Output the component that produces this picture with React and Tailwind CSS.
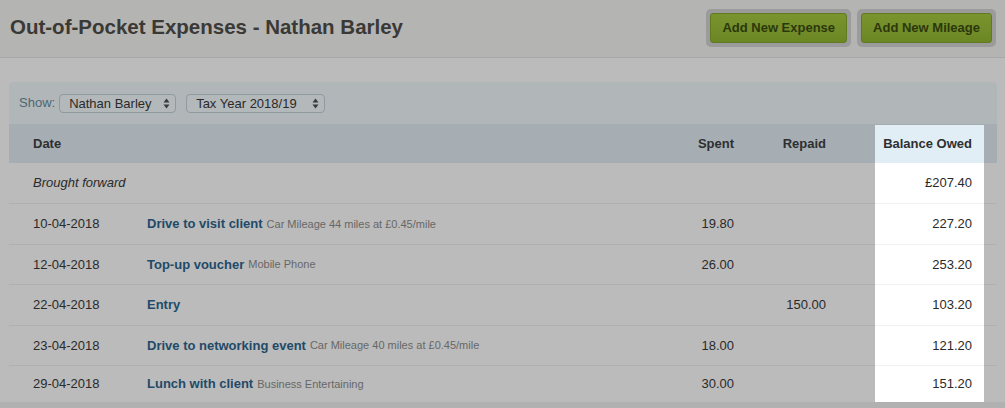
const rows = [
  { date: '10-04-2018', title: 'Drive to visit client', sub: 'Car Mileage 44 miles at £0.45/mile', spent: '19.80', repaid: '', balance: '227.20' },
  { date: '12-04-2018', title: 'Top-up voucher', sub: 'Mobile Phone', spent: '26.00', repaid: '', balance: '253.20' },
  { date: '22-04-2018', title: 'Entry', sub: '', spent: '', repaid: '150.00', balance: '103.20' },
  { date: '23-04-2018', title: 'Drive to networking event', sub: 'Car Mileage 40 miles at £0.45/mile', spent: '18.00', repaid: '', balance: '121.20' },
  { date: '29-04-2018', title: 'Lunch with client', sub: 'Business Entertaining', spent: '30.00', repaid: '', balance: '151.20' },
];

function SelectBox({ label, width }) {
  return (
    <div
      className={`flex items-center justify-between h-[19px] pl-[9px] pr-[5px] rounded-[4px] border border-[#8f9a9f] bg-[#b3b8ba] ${width}`}
    >
      <span className="text-[13px] text-[#2a2a2a] leading-none">{label}</span>
      <svg width="7" height="11" viewBox="0 0 7 11" className="text-[#3a3a3a]">
        <path d="M3.5 0.5 L6.5 4.5 H0.5 Z" fill="currentColor" />
        <path d="M3.5 10.5 L6.5 6.5 H0.5 Z" fill="currentColor" />
      </svg>
    </div>
  );
}

function GreenButton({ children }) {
  return (
    <div className="p-[4px] rounded-[5px] bg-[#9b9b9b]">
      <div className="h-[30px] px-[11px] flex items-center rounded-[3px] border border-[#5f7a1f] bg-gradient-to-b from-[#7a952e] to-[#6b8724] text-[13px] font-bold text-[#2c380c]">
        {children}
      </div>
    </div>
  );
}

export default function App() {
  return (
    <div className="w-[1005px] h-[408px] overflow-hidden bg-[#bbbbbb] font-['Liberation_Sans',Arial,sans-serif]">
      {/* Page header */}
      <div className="h-[58px] flex items-center justify-between pl-[10px] pr-[9px] bg-[#b4b4b3] border-b border-[#a8a8ac]">
        <h1 className="text-[20.5px] font-bold text-[#3a3935] -mt-[2px]">
          Out-of-Pocket Expenses - Nathan Barley
        </h1>
        <div className="flex gap-[6px] -mt-[2px]">
          <GreenButton>Add New Expense</GreenButton>
          <GreenButton>Add New Mileage</GreenButton>
        </div>
      </div>

      {/* Panel */}
      <div className="mt-[24px] ml-[9px] w-[988px] rounded-t-[4px] overflow-hidden">
        {/* Filters */}
        <div className="h-[42px] flex items-center gap-[10px] pl-[10px] bg-[#b1b6b8]">
          <div className="flex items-center gap-[4px]">
            <span className="text-[13px] text-[#4d6776]">Show:</span>
            <SelectBox label="Nathan Barley" width="w-[117px]" />
          </div>
          <SelectBox label="Tax Year 2018/19" width="w-[139px]" />
        </div>

        {/* Table header */}
        <div className="flex h-[39px] bg-[#a6aeb4] text-[13px] font-bold text-[#2e2f30]">
          <div className="w-[138px] pl-[24px] flex items-center">Date</div>
          <div className="flex-1" />
          <div className="w-[106px] pr-[12px] flex items-center justify-end">Spent</div>
          <div className="w-[92px] pr-[12px] flex items-center justify-end">Repaid</div>
          <div className="w-[37px]" />
          <div className="w-[109px] pr-[12px] flex items-center justify-end bg-[#e1eef6] mt-[1px]">Balance Owed</div>
          <div className="w-[13px]" />
        </div>

        {/* Brought forward */}
        <div className="flex h-[40px] text-[13px] text-[#2a2a2a]">
          <div className="flex-1 pl-[24px] flex items-center italic">Brought forward</div>
          <div className="w-[109px] pr-[12px] flex items-center justify-end bg-white">£207.40</div>
          <div className="w-[13px]" />
        </div>

        {rows.map((r, i) => (
          <div key={r.date} className={`flex text-[13px] text-[#2a2a2a] ${i === rows.length - 1 ? 'h-[37px]' : 'h-[40.5px]'}`}>
            <div className="flex-1 flex border-t border-[#b0b0b0]">
              <div className="w-[138px] pl-[24px] flex items-center">{r.date}</div>
              <div className="flex-1 flex items-center gap-[4px] whitespace-nowrap">
                <span className="font-bold text-[#1f4a68]">{r.title}</span>
                {r.sub && <span className="text-[11px] text-[#676767]">{r.sub}</span>}
              </div>
              <div className="w-[106px] pr-[12px] flex items-center justify-end">{r.spent}</div>
              <div className="w-[92px] pr-[12px] flex items-center justify-end">{r.repaid}</div>
              <div className="w-[37px]" />
            </div>
            <div className="w-[109px] pr-[12px] flex items-center justify-end bg-white border-t border-[#f1f1f1]">
              {r.balance}
            </div>
            <div className="w-[13px] border-t border-[#b0b0b0]" />
          </div>
        ))}
      </div>
      <div className="h-[10px] bg-[#b1b1b1]" />
    </div>
  );
}
